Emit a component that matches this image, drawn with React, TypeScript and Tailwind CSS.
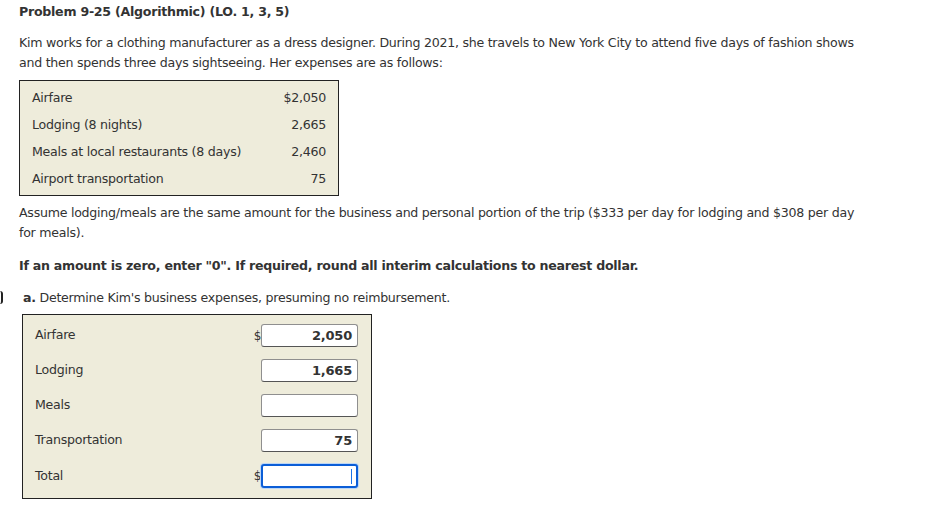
import React from "react";

const font = { fontFamily: '"DejaVu Sans", Verdana, sans-serif' };

function Input({ value, focus }: { value?: string; focus?: boolean }) {
  if (focus) {
    return (
      <div className="relative w-[97px] h-[24px] rounded-[3px] border-2 border-[#0b5ed7] bg-white shadow-[0_0_0_1px_#bcd6f5]">
        <span className="absolute right-[4px] top-[3px] w-[1px] h-[15px] bg-[#1a73e8]" />
      </div>
    );
  }
  return (
    <div className="w-[97px] h-[23px] rounded-[3px] border border-[#8f8f8f] border-b-[#555] bg-white flex items-center justify-end pr-[5px] text-[13px] tracking-[-0.2px] font-bold text-[#333]">
      {value}
    </div>
  );
}

export default function App() {
  const given = [
    ["Airfare", "$2,050"],
    ["Lodging (8 nights)", "2,665"],
    ["Meals at local restaurants (8 days)", "2,460"],
    ["Airport transportation", "75"],
  ];
  const answers: { label: string; dollar?: boolean; value?: string; focus?: boolean; h: string }[] = [
    { label: "Airfare", dollar: true, value: "2,050", h: "h-[35px]" },
    { label: "Lodging", value: "1,665", h: "h-[35px]" },
    { label: "Meals", value: "", h: "h-[35px]" },
    { label: "Transportation", value: "75", h: "h-[35px]" },
    { label: "Total", dollar: true, focus: true, h: "h-[36px]" },
  ];
  return (
    <div className="relative w-[939px] h-[517px] bg-white text-[#333] text-[12.6px] tracking-[-0.26px] pl-[19px]" style={font}>
      <div className="pt-[2px] leading-[20px] font-bold">Problem 9-25 (Algorithmic) (LO. 1, 3, 5)</div>
      <p className="mt-[11px] leading-[20px] w-[845px]">
        Kim works for a clothing manufacturer as a dress designer. During 2021, she travels to New York City to attend five days of fashion shows and then spends three days sightseeing. Her expenses are as follows:
      </p>
      <div className="mt-[7px] w-[320px] border border-[#222] bg-[#eeecdb] pt-[4px] pb-[2px] px-[12px]">
        {given.map(([l, v]) => (
          <div key={l} className="h-[27px] flex items-center justify-between">
            <span>{l}</span>
            <span>{v}</span>
          </div>
        ))}
      </div>
      <p className="mt-[7px] leading-[20px] w-[845px]">
        Assume lodging/meals are the same amount for the business and personal portion of the trip ($333 per day for lodging and $308 per day for meals).
      </p>
      <p className="mt-[13px] leading-[20px] font-bold">
        If an amount is zero, enter "0". If required, round all interim calculations to nearest dollar.
      </p>
      <div className="relative mt-[12px] leading-[20px] pl-[4px]">
        <span className="absolute left-[-19px] top-[3px] w-[3px] h-[13px] border-r-2 border-[#222] rounded-r-[4px]" />
        <span className="font-bold">a.</span> Determine Kim's business expenses, presuming no reimbursement.
      </div>
      <div className="mt-[6px] ml-[3px] w-[350px] border border-[#222] bg-[#eeecdb] pt-[3px] pb-[4px] pl-[12px] pr-[13px]">
        {answers.map((a) => (
          <div key={a.label} className={`${a.h} flex items-center justify-between`}>
            <span>{a.label}</span>
            <div className="flex items-center">
              <span className="w-[8px] text-right text-[12px]">{a.dollar ? "$" : ""}</span>
              <Input value={a.value} focus={a.focus} />
            </div>
          </div>
        ))}
      </div>
    </div>
  );
}
